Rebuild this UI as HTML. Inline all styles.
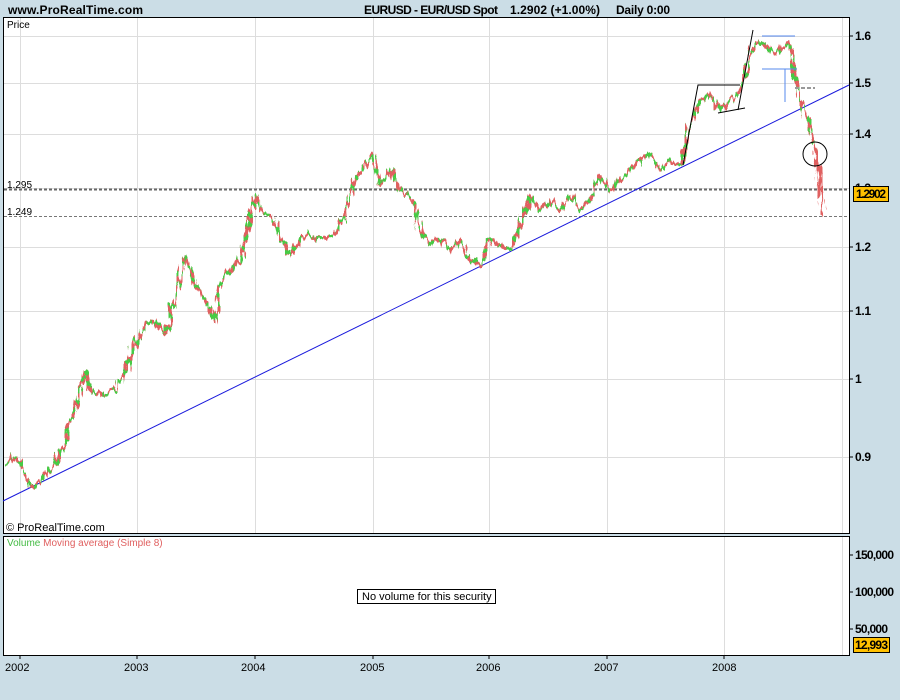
<!DOCTYPE html>
<html><head><meta charset="utf-8"><style>
body{margin:0;width:900px;height:700px;background:#cbdde6;font-family:"Liberation Sans",sans-serif;overflow:hidden;position:relative}
</style></head><body>
<svg width="900" height="700" style="position:absolute;left:0;top:0" font-family="Liberation Sans, sans-serif">
<defs>
<filter id="jit" x="-5%" y="-5%" width="110%" height="110%">
<feTurbulence type="fractalNoise" baseFrequency="0.3 0.06" numOctaves="2" seed="3"/>
<feDisplacementMap in="SourceGraphic" scale="12" xChannelSelector="R" yChannelSelector="G"/>
</filter>
</defs>
<text x="8" y="14" font-size="12" font-weight="bold" textLength="135">www.ProRealTime.com</text>
<text x="364" y="14" font-size="12" font-weight="bold" textLength="134">EURUSD - EUR/USD Spot</text>
<text x="510" y="14" font-size="12" font-weight="bold" textLength="90">1.2902 (+1.00%)</text>
<text x="616" y="14" font-size="12" font-weight="bold" textLength="54">Daily  0:00</text>
<rect x="3.5" y="17.5" width="846" height="516" fill="#fff" stroke="#000"/>
<rect x="3.5" y="536.5" width="846" height="119" fill="#fff" stroke="#000"/>
<g stroke="#ddd" stroke-width="1">
<line x1="20.5" y1="18" x2="20.5" y2="533"/><line x1="137.5" y1="18" x2="137.5" y2="533"/><line x1="255.5" y1="18" x2="255.5" y2="533"/><line x1="373.5" y1="18" x2="373.5" y2="533"/><line x1="489.5" y1="18" x2="489.5" y2="533"/><line x1="607.5" y1="18" x2="607.5" y2="533"/><line x1="724.5" y1="18" x2="724.5" y2="533"/><line x1="842.5" y1="18" x2="842.5" y2="533"/>
<line x1="724.5" y1="537" x2="724.5" y2="655"/><line x1="842.5" y1="537" x2="842.5" y2="655"/>
<line x1="4" y1="36.5" x2="849" y2="36.5"/><line x1="4" y1="83.5" x2="849" y2="83.5"/><line x1="4" y1="134.5" x2="849" y2="134.5"/><line x1="4" y1="188.5" x2="849" y2="188.5"/><line x1="4" y1="247.5" x2="849" y2="247.5"/><line x1="4" y1="311.5" x2="849" y2="311.5"/><line x1="4" y1="379.5" x2="849" y2="379.5"/><line x1="4" y1="457.5" x2="849" y2="457.5"/>
</g>
<line x1="4" y1="189.5" x2="849" y2="189.5" stroke="#666" stroke-width="2" stroke-dasharray="3,2"/>
<line x1="4" y1="216.5" x2="849" y2="216.5" stroke="#777" stroke-dasharray="3,2"/>
<line x1="3" y1="501" x2="849" y2="85" stroke="#1a1adc" stroke-width="1"/>
<g fill="none" stroke-width="3.5" stroke-linejoin="bevel" filter="url(#jit)">
<polyline stroke="#e06060" points="5,465 15,455 25,470 32,490 45,475 55,465 65,440 75,410 85,370 90,390 100,395 115,390 125,370 135,345 145,325 155,320 165,335 175,300 185,255 195,285 205,300 215,322 220,285 230,270 240,260 248,230 255,195 262,210 270,215 280,235 290,255 300,240 310,235 320,240 335,235 345,215 355,180 365,165 372,155 380,185 390,170 400,190 410,195 420,230 430,245 440,240 450,250 460,240 470,260 480,265 490,240 500,245 510,250 520,225 530,195 540,210 550,200 560,210 570,195 580,210 590,200 600,175 610,190 620,180 630,170 640,160 650,155 660,170 670,160 680,165 690,125 700,100 710,95 720,110 730,100 740,90 750,60 755,40 765,45 775,55 785,45 790,40 795,75 800,100 805,110 810,130 815,150 818,165 822,200 823,217"/>
<polyline stroke="#44cc44" stroke-dasharray="5,6" points="5,465 15,455 25,470 32,490 45,475 55,465 65,440 75,410 85,370 90,390 100,395 115,390 125,370 135,345 145,325 155,320 165,335 175,300 185,255 195,285 205,300 215,322 220,285 230,270 240,260 248,230 255,195 262,210 270,215 280,235 290,255 300,240 310,235 320,240 335,235 345,215 355,180 365,165 372,155 380,185 390,170 400,190 410,195 420,230 430,245 440,240 450,250 460,240 470,260 480,265 490,240 500,245 510,250 520,225 530,195 540,210 550,200 560,210 570,195 580,210 590,200 600,175 610,190 620,180 630,170 640,160 650,155 660,170 670,160 680,165 690,125 700,100 710,95 720,110 730,100 740,90 750,60 755,40 765,45 775,55 785,45 790,40 795,75 800,100 805,110 810,130 815,150"/>
</g>
<g stroke="#000" fill="none">
<polyline points="683,165 698,85 740,85"/><line x1="718" y1="113" x2="745" y2="108"/><line x1="738" y1="110" x2="753" y2="30"/>
<circle cx="815" cy="154" r="12"/>
</g>
<g stroke="#5588ee"><line x1="762" y1="36" x2="795" y2="36"/><line x1="762" y1="69" x2="797" y2="69"/><line x1="785" y1="69" x2="785" y2="102"/></g>
<line x1="795" y1="88" x2="815" y2="88" stroke="#999" stroke-width="2" stroke-dasharray="4,2"/>
<g stroke="#000"><line x1="849" y1="36" x2="853" y2="36"/><line x1="849" y1="83" x2="853" y2="83"/><line x1="849" y1="134" x2="853" y2="134"/><line x1="849" y1="247" x2="853" y2="247"/><line x1="849" y1="311" x2="853" y2="311"/><line x1="849" y1="379" x2="853" y2="379"/><line x1="849" y1="457" x2="853" y2="457"/>
<line x1="849" y1="555" x2="853" y2="555"/><line x1="849" y1="592" x2="853" y2="592"/><line x1="849" y1="629" x2="853" y2="629"/></g>
<g font-size="12" font-weight="bold">
<text x="855" y="40" textLength="16">1.6</text><text x="855" y="87" textLength="16">1.5</text><text x="855" y="138" textLength="16">1.4</text><text x="855" y="192" textLength="16">1.3</text><text x="855" y="251" textLength="16">1.2</text><text x="855" y="315" textLength="16">1.1</text><text x="855" y="383">1</text><text x="855" y="461" textLength="16">0.9</text>
<text x="855" y="559" textLength="39">150,000</text><text x="855" y="596" textLength="39">100,000</text><text x="855" y="633" textLength="33">50,000</text>
</g>
<rect x="853.5" y="186.5" width="35" height="15" fill="#ffc000" stroke="#000"/>
<text x="856" y="198" font-size="12" font-weight="bold" textLength="30">1.2902</text>
<rect x="853.5" y="637.5" width="36" height="15" fill="#ffc000" stroke="#000"/>
<text x="855" y="649" font-size="12" font-weight="bold" textLength="33">12,993</text>
<g font-size="10"><text x="7" y="188">1.295</text><text x="7" y="215">1.249</text><text x="7" y="28">Price</text></g>
<text x="6" y="531" font-size="11">© ProRealTime.com</text>
<text x="7" y="546" font-size="10" fill="#44bb44">Volume <tspan fill="#e06060">Moving average (Simple 8)</tspan></text>
<rect x="357.5" y="589.5" width="138" height="14" fill="#fff" stroke="#000"/>
<text x="362" y="600" font-size="11">No volume for this security</text>
<g font-size="11"><text x="5" y="671">2002</text><text x="124" y="671">2003</text><text x="241" y="671">2004</text><text x="360" y="671">2005</text><text x="476" y="671">2006</text><text x="594" y="671">2007</text><text x="712" y="671">2008</text></g>
<g stroke="#000"><line x1="20" y1="655" x2="20" y2="659"/><line x1="137" y1="655" x2="137" y2="659"/><line x1="255" y1="655" x2="255" y2="659"/><line x1="373" y1="655" x2="373" y2="659"/><line x1="489" y1="655" x2="489" y2="659"/><line x1="607" y1="655" x2="607" y2="659"/><line x1="724" y1="655" x2="724" y2="659"/></g>
</svg>
</body></html>
